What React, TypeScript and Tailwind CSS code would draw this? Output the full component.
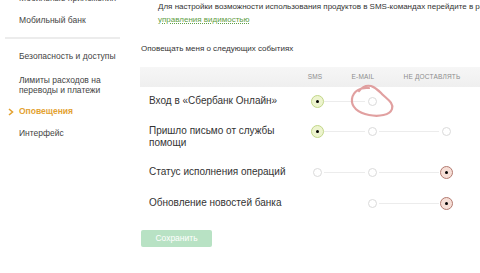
import React from 'react';

type Cell = 'green' | 'red' | 'off' | null;

const rows: { label: string[]; cells: Cell[]; h: string; pt: string }[] = [
  { label: ['Вход в «Сбербанк Онлайн»'], cells: ['green', 'off', null], h: 'h-[29px]', pt: 'pt-[8px]' },
  { label: ['Пришло письмо от службы', 'помощи'], cells: ['green', 'off', 'off'], h: 'h-[40px]', pt: 'pt-[9px]' },
  { label: ['Статус исполнения операций'], cells: ['off', 'off', 'red'], h: 'h-[31px]', pt: 'pt-[10px]' },
  { label: ['Обновление новостей банка'], cells: [null, 'off', 'red'], h: 'h-[31px]', pt: 'pt-[10px]' },
];

function Radio({ state }: { state: Cell }) {
  if (state === null) return <span className="w-[14px] shrink-0" />;
  if (state === 'off') {
    return (
      <span className="w-[14px] shrink-0 flex items-center justify-center">
        <span className="w-[9px] h-[9px] rounded-full border border-[#dadada] bg-white" />
      </span>
    );
  }
  const ring =
    state === 'green'
      ? 'border-[#c2d688] bg-[#edf4cf]'
      : 'border-[#b27a70] bg-[#f6ded6]';
  return (
    <span className="w-[14px] shrink-0 flex items-center justify-center">
      <span className={`w-[13px] h-[13px] rounded-full border-[1.5px] ${ring} flex items-center justify-center`}>
        <span className="w-[3px] h-[3px] rounded-full bg-black" />
      </span>
    </span>
  );
}

function Line({ on, w }: { on: boolean; w: string }) {
  return <span className={`${w} h-px shrink-0 ${on ? 'bg-[#ececec]' : ''}`} />;
}

export default function App() {
  return (
    <div
      className="relative w-[480px] h-[273px] overflow-hidden bg-white flex"
      style={{ fontFamily: '"Liberation Sans", Arial, sans-serif' }}
    >
      {/* sidebar */}
      <aside className="w-[140px] shrink-0 pl-[19px] text-[8.5px] leading-[11px] text-[#444]">
        <div className="-mt-[7px] whitespace-nowrap">Мобильные приложения</div>
        <div className="mt-[11px]">Мобильный банк</div>
        <div className="mt-[11px] -ml-[14px] w-[115px] h-[2px] bg-[#ececec]" />
        <div className="mt-[12px] whitespace-nowrap">Безопасность и доступы</div>
        <div className="mt-[13px] leading-[10px]">
          Лимиты расходов на
          <br />
          переводы и платежи
        </div>
        <div className="mt-[11px] relative font-bold text-[#e3a232]">
          <svg className="absolute -left-[11px] top-[2px]" width="6" height="8" viewBox="0 0 6 8">
            <path d="M1 1 L4.5 4 L1 7" fill="none" stroke="#e3a232" strokeWidth="1.6" />
          </svg>
          Оповещения
        </div>
        <div className="mt-[11px]">Интерфейс</div>
      </aside>

      {/* content */}
      <main className="flex-1 min-w-0">
        <div className="pl-[18px] text-[8px] leading-[13px] text-[#333] whitespace-nowrap">
          <div>Для настройки возможности использования продуктов в SMS-командах перейдите в раздел</div>
          <div>
            <a className="text-[#5f9e45] underline decoration-dotted">управления видимостью</a>
          </div>
        </div>

        <div className="mt-[17px] pl-[1px] text-[8px] leading-[12px] text-[#333]">
          Оповещать меня о следующих событиях
        </div>

        <div className="mt-[12px] h-[20px] flex items-center bg-gradient-to-b from-[#f6f6f6] to-[#efefef] text-[6.5px] uppercase text-[#8d8d8d] tracking-[0.2px]">
          <span className="w-[165px]" />
          <span className="w-[20px] text-center">SMS</span>
          <span className="ml-[23px] w-[30px] text-center">E-mail</span>
          <span className="ml-[24px] w-[60px] text-center whitespace-nowrap">Не доставлять</span>
        </div>

        {rows.map((r, i) => (
          <div key={i} className={`flex items-start ${r.h} ${r.pt}`}>
            <div className="w-[170px] pl-[9px] text-[10px] leading-[12px] text-[#333]">
              {r.label.map((l, j) => (
                <div key={j}>{l}</div>
              ))}
            </div>
            <div className="h-[12px] flex items-center">
              <Radio state={r.cells[0]} />
              <Line on={r.cells[0] !== null && r.cells[1] !== null} w="w-[41px]" />
              <Radio state={r.cells[1]} />
              <Line on={r.cells[1] !== null && r.cells[2] !== null} w="w-[60px]" />
              <Radio state={r.cells[2]} />
            </div>
          </div>
        ))}

        <button className="mt-[12px] ml-[1px] w-[71px] h-[17px] rounded-[2px] bg-[#b8e2c4] text-white text-[8.5px]">
          Сохранить
        </button>
      </main>

      {/* hand-drawn annotation */}
      <svg className="absolute left-0 top-0 pointer-events-none" width="480" height="273" viewBox="0 0 480 273">
        <path
          d="M369 88 C361 87 353 91 352 99 C351 107 358 113 369 115 C379 117 390 115 392 109 C394 103 387 99 383 95 C379 91 377 88 371 86 C366 85 362 87 359 91"
          fill="none"
          stroke="#dc8f8f"
          strokeWidth="2.2"
          strokeLinecap="round"
          opacity="0.85"
        />
      </svg>
    </div>
  );
}
